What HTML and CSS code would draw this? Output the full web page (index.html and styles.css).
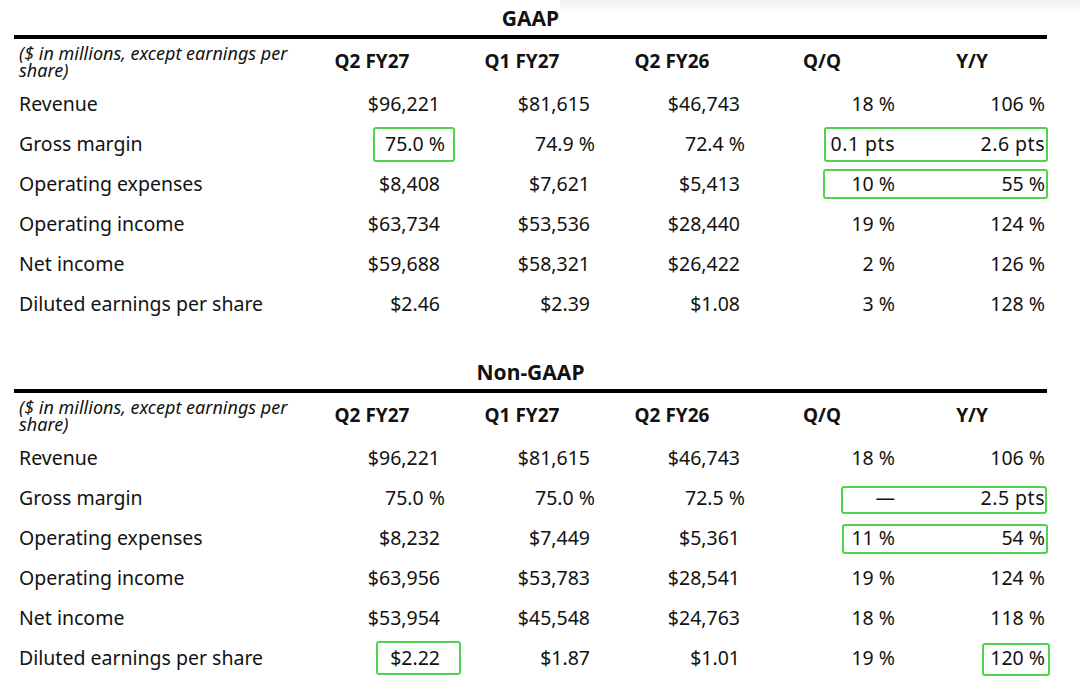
FILE: index.html
```html
<!DOCTYPE html>
<html lang="en">
<head>
<meta charset="utf-8">
<title>GAAP and Non-GAAP summary</title>
<link rel="stylesheet" href="styles.css">
</head>
<body>
<div class="haze"></div>
<main class="page">
  <section class="fin">
    <h2 class="title">GAAP</h2>
    <div class="grid">
      <div class="cell head note">($ in millions, except earnings per share)</div>
      <div class="cell head">Q2 FY27</div>
      <div class="cell head">Q1 FY27</div>
      <div class="cell head">Q2 FY26</div>
      <div class="cell head">Q/Q</div>
      <div class="cell head">Y/Y</div>

      <div class="cell label">Revenue</div>
      <div class="cell num usd">$96,221</div>
      <div class="cell num usd">$81,615</div>
      <div class="cell num usd">$46,743</div>
      <div class="cell num">18 %</div>
      <div class="cell num">106 %</div>

      <div class="cell label">Gross margin</div>
      <div class="cell num">75.0 %</div>
      <div class="cell num">74.9 %</div>
      <div class="cell num">72.4 %</div>
      <div class="cell num wide">0.1 pts</div>
      <div class="cell num wide">2.6 pts</div>

      <div class="cell label">Operating expenses</div>
      <div class="cell num usd">$8,408</div>
      <div class="cell num usd">$7,621</div>
      <div class="cell num usd">$5,413</div>
      <div class="cell num">10 %</div>
      <div class="cell num">55 %</div>

      <div class="cell label">Operating income</div>
      <div class="cell num usd">$63,734</div>
      <div class="cell num usd">$53,536</div>
      <div class="cell num usd">$28,440</div>
      <div class="cell num">19 %</div>
      <div class="cell num">124 %</div>

      <div class="cell label">Net income</div>
      <div class="cell num usd">$59,688</div>
      <div class="cell num usd">$58,321</div>
      <div class="cell num usd">$26,422</div>
      <div class="cell num">2 %</div>
      <div class="cell num">126 %</div>

      <div class="cell label">Diluted earnings per share</div>
      <div class="cell num usd">$2.46</div>
      <div class="cell num usd">$2.39</div>
      <div class="cell num usd">$1.08</div>
      <div class="cell num">3 %</div>
      <div class="cell num">128 %</div>
    </div>
    <span class="mark m-g1"></span>
    <span class="mark m-g2"></span>
    <span class="mark m-g3"></span>
  </section>

  <section class="fin">
    <h2 class="title">Non-GAAP</h2>
    <div class="grid">
      <div class="cell head note">($ in millions, except earnings per share)</div>
      <div class="cell head">Q2 FY27</div>
      <div class="cell head">Q1 FY27</div>
      <div class="cell head">Q2 FY26</div>
      <div class="cell head">Q/Q</div>
      <div class="cell head">Y/Y</div>

      <div class="cell label">Revenue</div>
      <div class="cell num usd">$96,221</div>
      <div class="cell num usd">$81,615</div>
      <div class="cell num usd">$46,743</div>
      <div class="cell num">18 %</div>
      <div class="cell num">106 %</div>

      <div class="cell label">Gross margin</div>
      <div class="cell num">75.0 %</div>
      <div class="cell num">75.0 %</div>
      <div class="cell num">72.5 %</div>
      <div class="cell num">—</div>
      <div class="cell num wide">2.5 pts</div>

      <div class="cell label">Operating expenses</div>
      <div class="cell num usd">$8,232</div>
      <div class="cell num usd">$7,449</div>
      <div class="cell num usd">$5,361</div>
      <div class="cell num">11 %</div>
      <div class="cell num">54 %</div>

      <div class="cell label">Operating income</div>
      <div class="cell num usd">$63,956</div>
      <div class="cell num usd">$53,783</div>
      <div class="cell num usd">$28,541</div>
      <div class="cell num">19 %</div>
      <div class="cell num">124 %</div>

      <div class="cell label">Net income</div>
      <div class="cell num usd">$53,954</div>
      <div class="cell num usd">$45,548</div>
      <div class="cell num usd">$24,763</div>
      <div class="cell num">18 %</div>
      <div class="cell num">118 %</div>

      <div class="cell label">Diluted earnings per share</div>
      <div class="cell num usd">$2.22</div>
      <div class="cell num usd">$1.87</div>
      <div class="cell num usd">$1.01</div>
      <div class="cell num">19 %</div>
      <div class="cell num">120 %</div>
    </div>
    <span class="mark m-n1"></span>
    <span class="mark m-n2"></span>
    <span class="mark m-n3"></span>
    <span class="mark m-n4"></span>
  </section>
</main>
</body>
</html>
```

FILE: styles.css
```css
* { box-sizing: border-box; }

html, body {
  margin: 0;
  padding: 0;
  background: #ffffff;
}

body {
  font-family: "Noto Sans", "Open Sans", sans-serif;
  color: #121212;
  position: relative;
}

.haze {
  position: absolute;
  top: 0;
  left: 560px;
  right: 0;
  height: 14px;
  background: linear-gradient(to bottom, #f1f1f1, rgba(255,255,255,0));
  pointer-events: none;
}

.page {
  padding-left: 14px;
  display: flex;
  flex-direction: column;
  gap: 30px;
}

.fin {
  position: relative;
  width: 1033px;
}

.title {
  margin: 0;
  height: 39px;
  display: flex;
  align-items: center;
  justify-content: center;
  font-size: 21px;
  font-weight: 700;
  line-height: 1;
  padding-top: 1px;
  border-bottom: 4px solid #000;
}

.grid {
  display: grid;
  grid-template-columns: 283px repeat(5, 150px);
  grid-template-rows: 45px repeat(6, 40px);
}

.cell {
  display: flex;
  align-items: center;
  font-size: 19.5px;
  line-height: 1;
  white-space: nowrap;
}

.head {
  justify-content: center;
  font-weight: 700;
  font-size: 19px;
}

.note {
  justify-content: flex-start;
  white-space: normal;
  font-style: italic;
  font-weight: 400;
  font-size: 18px;
  line-height: 17px;
  padding-left: 5px;
  padding-right: 4px;
}

.label {
  padding-left: 5px;
}

.num {
  justify-content: flex-end;
  padding-right: 2px;
}

.num.usd {
  padding-right: 7px;
}

.num.wide {
  letter-spacing: 0.5px;
}

.mark {
  position: absolute;
  border: 2px solid #4fd44c;
  border-radius: 3px;
  pointer-events: none;
}

.m-g1 { left: 359px; top: 127px; width: 82px; height: 35px; }
.m-g2 { left: 810px; top: 127px; width: 224px; height: 35px; }
.m-g3 { left: 809px; top: 169px; width: 225px; height: 30px; }

.m-n1 { left: 827px; top: 132px; width: 206px; height: 28px; }
.m-n2 { left: 828px; top: 170px; width: 206px; height: 30px; }
.m-n3 { left: 362px; top: 287px; width: 85px; height: 34px; }
.m-n4 { left: 968px; top: 289px; width: 68px; height: 33px; }
```
